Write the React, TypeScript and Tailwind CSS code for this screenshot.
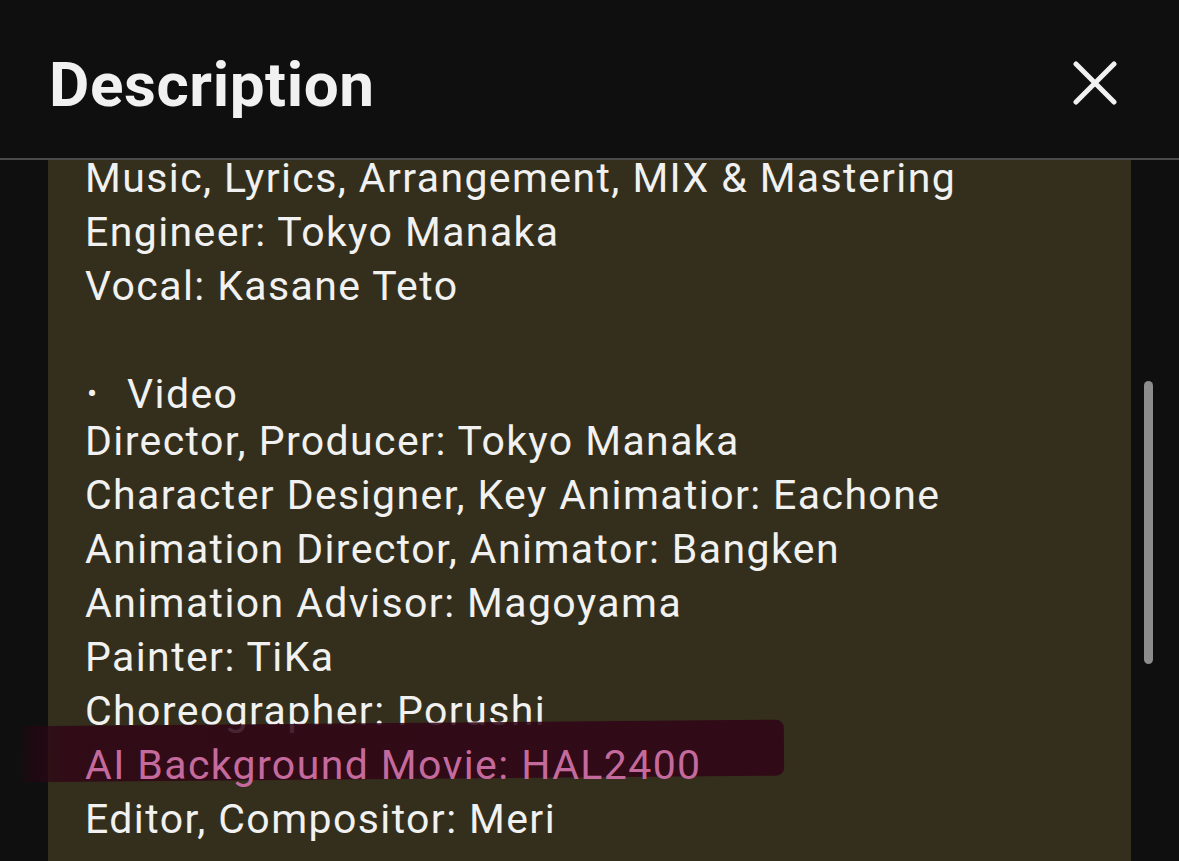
import React from "react";

const lines1 = [
  "Music, Lyrics, Arrangement, MIX & Mastering",
  "Engineer: Tokyo Manaka",
  "Vocal: Kasane Teto",
];

const lines2 = [
  "Director, Producer: Tokyo Manaka",
  "Character Designer, Key Animatior: Eachone",
  "Animation Director, Animator: Bangken",
  "Animation Advisor: Magoyama",
  "Painter: TiKa",
  "Choreographer: Porushi",
];

export default function App() {
  return (
    <div
      className="relative w-[1179px] h-[861px] bg-[#0f0f0f] overflow-hidden flex flex-col text-[#f1f1f1]"
      style={{ fontFamily: "Roboto, 'Noto Sans', sans-serif" }}
    >
      <header className="h-[158px] shrink-0 flex items-center justify-between pl-[49px] pr-[62px]">
        <h1 className="text-[62px] font-bold leading-none tracking-[0.6px] mt-[12px]">Description</h1>
        <svg width="44" height="44" viewBox="0 0 44 44" className="mt-[8px]">
          <path d="M3 3 L41 41 M41 3 L3 41" stroke="#f1f1f1" strokeWidth="5" strokeLinecap="round" />
        </svg>
      </header>
      <div className="h-[2px] shrink-0 bg-[#4a4a4a]" />
      <div className="relative flex-1 flex overflow-hidden">
        <div className="ml-[48px] w-[1083px] bg-[#332f1c] pl-[37px] overflow-hidden">
          <div className="mt-[-9px] text-[41px] leading-[54px] tracking-[1.4px]">
            {lines1.map((l) => (
              <div key={l} className="h-[54px] whitespace-nowrap">{l}</div>
            ))}
            <div className="h-[54px]" />
            <div className="h-[47px] flex items-start whitespace-nowrap">
              <span className="w-[42px] pl-[2px] text-[30px] leading-[54px]">•</span>
              <span>Video</span>
            </div>
            {lines2.map((l) => (
              <div key={l} className="h-[54px] whitespace-nowrap">{l}</div>
            ))}
            <div className="relative h-[54px] whitespace-nowrap">
              <span className="relative z-10 text-[#c46a9d]">AI Background Movie: HAL2400</span>
            </div>
            <div className="h-[54px] whitespace-nowrap">Editor, Compositor: Meri</div>
          </div>
        </div>
        <div className="flex-1 relative">
          <div className="absolute left-[13px] top-[221px] w-[9px] h-[283px] rounded-full bg-[#8c8c8c]" />
        </div>
        <div
          className="absolute left-[18px] top-[563px] w-[766px] h-[56px] rounded-r-[8px] z-0 pointer-events-none"
          style={{
            background:
              "linear-gradient(90deg, rgba(40,4,18,0) 0%, rgba(40,4,18,0.6) 2%, rgba(48,6,22,0.86) 6%, rgba(48,6,22,0.9) 100%)",
            transform: "rotate(-0.5deg)",
          }}
        />
      </div>
    </div>
  );
}
